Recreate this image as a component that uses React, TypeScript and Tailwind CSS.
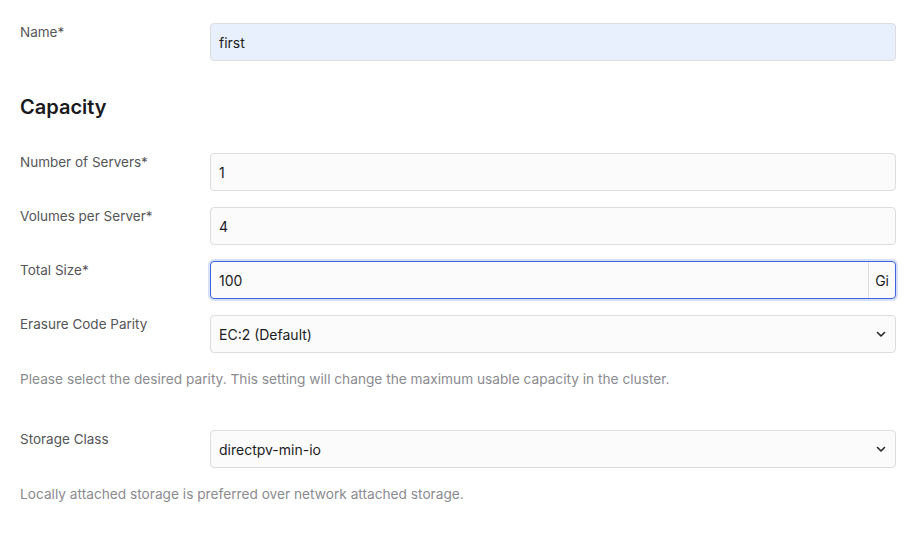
import React from "react";

const font = { fontFamily: "Inter, 'Noto Sans', sans-serif" };

function Chevron() {
  return (
    <svg width="12" height="12" viewBox="0 0 12 12" fill="none" className="shrink-0">
      <path d="M2.5 4.5 L6 8 L9.5 4.5" stroke="#27272a" strokeWidth="1.6" strokeLinecap="round" strokeLinejoin="round" />
    </svg>
  );
}

function Row({ label, children }: { label: string; children: React.ReactNode }) {
  return (
    <div className="flex items-start">
      <div className="w-[190px] shrink-0 text-[13.5px] leading-[18px] text-[#555558]">{label}</div>
      <div className="flex-1">{children}</div>
    </div>
  );
}

function Input({ value, bg = "bg-[#fbfbfc]" }: { value: string; bg?: string }) {
  return (
    <div className={`h-[38px] flex items-center px-[8px] rounded-[4px] border border-[#dcdce1] ${bg} text-[14px] text-[#1c1c1e]`}>
      {value}
    </div>
  );
}

function Select({ value }: { value: string }) {
  return (
    <div className="h-[38px] flex items-center justify-between pl-[8px] pr-[8px] rounded-[4px] border border-[#dcdce1] bg-[#fbfbfc] text-[14px] text-[#1c1c1e]">
      <span>{value}</span>
      <Chevron />
    </div>
  );
}

export default function App() {
  return (
    <div style={font} className="w-[920px] h-[540px] bg-white pl-[20px] pr-[24px] pt-[23px]">
      <Row label="Name*">
        <Input value="first" bg="bg-[#e8f0fe]" />
      </Row>
      <h2 className="mt-[32px] text-[20px] leading-[28px] font-semibold text-[#1a1a1c]">Capacity</h2>
      <div className="mt-[32px] flex flex-col gap-[16px]">
        <Row label="Number of Servers*">
          <Input value="1" />
        </Row>
        <Row label="Volumes per Server*">
          <Input value="4" />
        </Row>
        <Row label="Total Size*">
          <div className="h-[38px] flex items-stretch rounded-[4px] border border-[#3e63dd] ring-[2px] ring-[#3e63dd]/20 bg-[#fbfbfc] text-[14px] text-[#1c1c1e] overflow-hidden">
            <div className="flex-1 flex items-center px-[8px]">100</div>
            <div className="flex items-center px-[6px] border-l border-[#dcdce1]">Gi</div>
          </div>
        </Row>
        <Row label="Erasure Code Parity">
          <Select value="EC:2 (Default)" />
        </Row>
      </div>
      <p className="mt-[16px] text-[13.7px] leading-[20px] text-[#8b8b90]">
        Please select the desired parity. This setting will change the maximum usable capacity in the cluster.
      </p>
      <div className="mt-[41px]">
        <Row label="Storage Class">
          <Select value="directpv-min-io" />
        </Row>
      </div>
      <p className="mt-[16px] text-[13.7px] leading-[20px] text-[#8b8b90]">
        Locally attached storage is preferred over network attached storage.
      </p>
    </div>
  );
}
